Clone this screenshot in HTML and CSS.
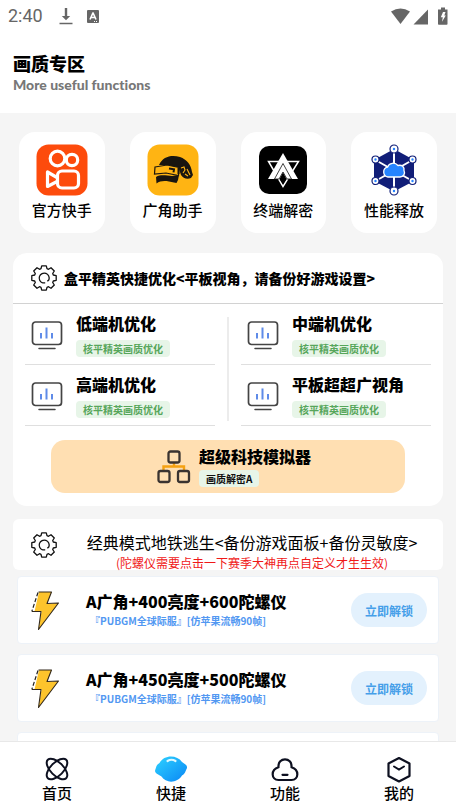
FILE: index.html
```html
<!DOCTYPE html>
<html lang="zh-CN">

<head>
    <meta charset="utf-8">
    <meta name="viewport" content="width=device-width, initial-scale=1">
    <title>画质专区</title>
    <link rel="stylesheet" href="styles.css">
</head>

<body>
    <!-- shared icons -->
    <svg class="sprite" width="0" height="0">
        <symbol id="gear" viewBox="-13 -13 26 26">
            <path d="M-3-9.3L-2.3-12.2H2.3L3-9.3 4.5-8.7 7-10.3 10.3-7 8.7-4.5 9.3-3 12.2-2.3V2.3L9.3 3 8.7 4.5 10.3 7 7 10.3 4.5 8.7 3 9.3 2.3 12.2H-2.3L-3 9.3-4.5 8.7-7 10.3-10.3 7-8.7 4.5-9.3 3-12.2 2.3V-2.3L-9.3-3-8.7-4.5-10.3-7-7-10.3-4.5-8.7Z" fill="none" stroke="#111" stroke-width="1.300" stroke-linejoin="round" />
            <path d="M-1.500 4.800A5 5 0 1 1 4.900 1.800L3.400 3.200M-1.500 4.800H1.200" fill="none" stroke="#111" stroke-width="1.300" />
        </symbol>
        <symbol id="monitor" viewBox="0 0 32 29">
            <rect x="1.500" y="1" width="29" height="22.500" rx="3" fill="#fff" stroke="#444" stroke-width="1.700" />
            <path d="M8 27.500H24" stroke="#444" stroke-width="1.500" stroke-linecap="round" />
            <path d="M10 12v5.500M15.500 6.500v11M21 12v5.500" stroke="#5f8be8" stroke-width="2" />
        </symbol>
        <symbol id="bolt" viewBox="0 0 30 40">
            <path d="M9 2H21.500L17 14 28.500 13 8.500 39.500 11 21.500H2Z" fill="#fff" />
            <path d="M9 2H21.500L17 14 28.500 13 8.500 39.500 11.500 21.500H4.500Z" fill="#fdc42c" />
            <path d="M8.500 2H21.500L17 13.500 28.500 13 8.500 39.500 11 21.500H2" fill="none" stroke="#33291c" stroke-width="1.100" stroke-linejoin="round" />
            <path d="M8 2.500L1.800 21.500" stroke="#222" stroke-width="1.200" stroke-dasharray="4 2" />
        </symbol>
    </svg>

    <div class="status">
        <span class="time">2:40</span>
        <svg class="st-down" width="14" height="18" viewBox="0 0 14 18">
            <path d="M5.800 1h2.400v8h3L7 13.200 2.800 9h3z" fill="#666" />
            <path d="M.5 16.500h13" stroke="#666" stroke-width="1.500" />
        </svg>
        <svg class="st-a" width="12" height="13" viewBox="0 0 12 13">
            <rect width="12" height="13" rx="1" fill="#666" />
            <path d="M3 9.500L5.900 3h.2L9 9.500M4.200 7.500h3.600" fill="none" stroke="#fff" stroke-width="1.600" />
            <path d="M7 11.500h1M9 11.500h1" stroke="#fff" />
        </svg>
        <svg class="st-right" width="58" height="18" viewBox="0 0 58 18">
            <path d="M1 4.500Q10.500-1.500 20 4.500L10.500 17z" fill="#666" />
            <path d="M38 2.500V17.500H23.500z" fill="#666" />
            <path d="M51 .5h4v2h2.500V17a.8.8 0 0 1-.8.8h-7.900a.8.8 0 0 1-.8-.8V2.500h3z" fill="#666" />
            <path d="M53 5h2.500l-1.200 3.600h1.500L52 14.800l.8-4.600h-2z" fill="#fff" />
        </svg>
    </div>

    <header class="top">
        <h1>画质专区</h1>
        <p>More useful functions</p>
    </header>

    <main>
        <div class="apps">
            <a class="app" href="#">
                <svg width="52" height="52" viewBox="0 0 52 52">
                    <rect x=".5" y=".5" width="51" height="51" rx="12" fill="#fd4b0c" />
                    <g fill="none" stroke="#fff" stroke-width="3.200" stroke-linejoin="round">
                        <circle cx="21.500" cy="14.500" r="7.300" />
                        <circle cx="36" cy="16" r="5.700" />
                        <rect x="21.500" y="27" width="21" height="17" rx="4.500" />
                        <path d="M21 33.500L11.500 28V42.500L21 37.500" />
                    </g>
                </svg>
                <span>官方快手</span>
            </a>
            <a class="app" href="#">
                <svg width="52" height="52" viewBox="0 0 52 52">
                    <rect x=".5" y=".5" width="51" height="51" rx="12" fill="#ffb413" />
                    <path d="M12 21C16 12 25 10.500 33 13C40 15.500 44 21 45 28L46 31 44 34C40 36 36 34 34 31L32 25 20 21Z" fill="#191510" />
                    <path d="M9.500 39.500L9 33C14 30 20 32 25 32L32 31 31 36 29.500 39 22 37.500C17 36.500 13 37 9.500 39.500Z" fill="#191510" />
                    <path d="M8 23L20 21 32 23.500 31.500 31.500 19 29 7.500 30Z" fill="#ffb413" stroke="#191510" stroke-width="1.200" />
                    <path d="M22 24.500l5 .8-.5 3M31.500 24v6" fill="none" stroke="#191510" stroke-width="2" />
                    <path d="M34 24l3-1 1 3-2 3M40 25l3 6M38 30l3 2" fill="none" stroke="#ffb413" stroke-width="1.100" />
                </svg>
                <span>广角助手</span>
            </a>
            <a class="app" href="#">
                <svg width="52" height="52" viewBox="0 0 52 52">
                    <rect x="2" y="2" width="48" height="48" rx="10" fill="#000" />
                    <path d="M11.500 17.500H41.500L26 42.500Z" fill="none" stroke="#fff" stroke-width="1.500" />
                    <path d="M26 9L41 35H11Z" fill="#fff" />
                    <path d="M26 19.500L34.500 35H30L26 28 22 35H17.500Z" fill="#fff" stroke="#111" stroke-width=".8" />
                    <path d="M22.500 35L26 28.500 29.500 35 26 40.500Z" fill="#000" />
                </svg>
                <span>终端解密</span>
            </a>
            <a class="app" href="#">
                <svg width="52" height="52" viewBox="0 0 52 52">
                    <path d="M26 5L46 16V37L26 47.500 6 37V16Z" fill="#111e78" />
                    <path d="M26 5V47M7.500 16L44.500 37M44.500 16L7.500 37" stroke="#fff" stroke-width="2" />
                    <g fill="#fff" stroke="#111e78" stroke-width="1.200">
                        <circle cx="26" cy="5" r="4" />
                        <circle cx="44.500" cy="15.500" r="3.500" />
                        <circle cx="44.500" cy="37" r="3.500" />
                        <circle cx="26" cy="47" r="4" />
                        <circle cx="7.500" cy="37" r="3.500" />
                        <circle cx="7.500" cy="15.500" r="3.500" />
                    </g>
                    <path d="M26 5h0M44.500 15.500h0M44.500 37h0M26 47h0M7.500 37h0M7.500 15.500h0" stroke="#2684ff" stroke-width="2.400" stroke-linecap="round" />
                    <path d="M20 33a5 5 0 0 1-.5-9.800C21 18.500 27 18 30 21.500c4-1 6.500 1.500 6 5 1.500 3-.5 6.500-4 6.500z" fill="#2684ff" stroke="#fff" stroke-width="1.300" />
                </svg>
                <span>性能释放</span>
            </a>
        </div>

        <section class="panel">
            <div class="panel-head">
                <svg width="26" height="26"><use href="#gear" /></svg>
                <h2>盒平精英快捷优化&lt;平板视角，请备份好游戏设置&gt;</h2>
            </div>
            <div class="grid">
                <div class="col">
                    <a class="cell" href="#">
                        <svg width="32" height="29"><use href="#monitor" /></svg>
                        <div><b>低端机优化</b><span class="tag">核平精英画质优化</span></div>
                    </a>
                    <a class="cell" href="#">
                        <svg width="32" height="29"><use href="#monitor" /></svg>
                        <div><b>高端机优化</b><span class="tag">核平精英画质优化</span></div>
                    </a>
                </div>
                <div class="split"></div>
                <div class="col">
                    <a class="cell" href="#">
                        <svg width="32" height="29"><use href="#monitor" /></svg>
                        <div><b>中端机优化</b><span class="tag">核平精英画质优化</span></div>
                    </a>
                    <a class="cell" href="#">
                        <svg width="32" height="29"><use href="#monitor" /></svg>
                        <div><b>平板超超广视角</b><span class="tag">核平精英画质优化</span></div>
                    </a>
                </div>
            </div>
            <button class="super" type="button">
                <svg width="34" height="34" viewBox="0 0 34 34">
                    <path d="M6.500 20V16.500H27V20M17 13v3.500" fill="none" stroke="#f5a112" stroke-width="2.400" />
                    <g fill="none" stroke="#3a3330" stroke-width="2.300">
                        <rect x="11.500" y="1.500" width="11" height="11" rx="2" />
                        <rect x="1.500" y="21" width="11" height="11" rx="2" />
                        <rect x="21" y="21" width="11" height="11" rx="2" />
                    </g>
                </svg>
                <span class="super-text"><b>超级科技模拟器</b><span class="tag dark">画质解密A</span></span>
            </button>
        </section>

        <section class="notice">
            <svg width="26" height="26"><use href="#gear" /></svg>
            <div>
                <h2>经典模式地铁逃生&lt;备份游戏面板+备份灵敏度&gt;</h2>
                <p>(陀螺仪需要点击一下赛季大神再点自定义才生生效)</p>
            </div>
        </section>

        <ul class="list">
            <li>
                <svg width="30" height="40"><use href="#bolt" /></svg>
                <div class="info">
                    <b>A广角+400亮度+600陀螺仪</b>
                    <span>『PUBGM全球际服』[仿苹果流畅90帧]</span>
                </div>
                <button type="button">立即解锁</button>
            </li>
            <li>
                <svg width="30" height="40"><use href="#bolt" /></svg>
                <div class="info">
                    <b>A广角+450亮度+500陀螺仪</b>
                    <span>『PUBGM全球际服』[仿苹果流畅90帧]</span>
                </div>
                <button type="button">立即解锁</button>
            </li>
            <li></li>
        </ul>
    </main>

    <nav>
        <a href="#">
            <svg width="34" height="28" viewBox="0 0 34 28">
                <g fill="none" stroke="#0d1020" stroke-width="2">
                    <ellipse cx="17" cy="14" rx="13" ry="6.500" transform="rotate(45 17 14)" />
                    <ellipse cx="17" cy="14" rx="13" ry="6.500" transform="rotate(-45 17 14)" />
                </g>
            </svg>
            <span>首页</span>
        </a>
        <a href="#">
            <svg width="34" height="28" viewBox="0 0 34 28">
                <defs>
                    <linearGradient id="blue" x1="0" y1="0" x2="1" y2="1">
                        <stop offset="0" stop-color="#2ed3ff" />
                        <stop offset="1" stop-color="#0a86f5" />
                    </linearGradient>
                </defs>
                <path d="M5.500 8C10-.5 23-.5 28 7L31.500 9.500Q34 11.500 32.500 14L31 17.500Q30 19.500 28 20.500C23 28.500 12 28.500 7.500 21.500L2.500 18.500Q.5 17 1.200 15L2.500 11Q3.500 9 5.500 8Z" fill="url(#blue)" />
                <path d="M13.500 6Q17.500 3.500 21.500 6" fill="none" stroke="#dff8ff" stroke-width="2.200" stroke-linecap="round" />
            </svg>
            <span>快捷</span>
        </a>
        <a href="#">
            <svg width="34" height="28" viewBox="0 0 34 28">
                <path d="M10.500 12.200C9.500 1.800 24.500 1.800 23.500 12.200C31.500 14.500 31 25 23.500 25H10.500C3 25 2.500 14.500 10.500 12.200Z" fill="none" stroke="#0d1020" stroke-width="2.200" stroke-linejoin="round" />
                <path d="M14.500 19.800h5" stroke="#0d1020" stroke-width="2.200" stroke-linecap="round" />
            </svg>
            <span>功能</span>
        </a>
        <a href="#">
            <svg width="34" height="28" viewBox="0 0 34 28">
                <path d="M17 3L27.500 8.500V21L17 26.500 6.500 21V8.500Z" fill="none" stroke="#0d1020" stroke-width="2.200" stroke-linejoin="round" />
                <path d="M12 11.500L17 14.500 22 11.500" fill="none" stroke="#0d1020" stroke-width="2" stroke-linecap="round" />
            </svg>
            <span>我的</span>
        </a>
    </nav>
</body>

</html>
```

FILE: styles.css
```css
* {
    box-sizing: border-box;
}

body {
    margin: 0;
    height: 100vh;
    display: flex;
    flex-direction: column;
    font-family: "Noto Sans CJK SC", sans-serif;
    color: #000;
    background: #f5f5f5;
}

h1,
h2,
p,
ul {
    margin: 0;
    padding: 0;
}

a {
    color: inherit;
    text-decoration: none;
}

button {
    font-family: inherit;
    border: 0;
    color: inherit;
    cursor: pointer;
}

svg {
    display: block;
    flex: none;
}

.sprite {
    position: absolute;
}

/* status bar */
.status {
    display: flex;
    align-items: center;
    height: 32px;
    padding: 0 8px;
    background: #fff;
    flex: none;
}

.time {
    width: 51px;
    font: 18px/32px Roboto, sans-serif;
    color: #666;
}

.st-a {
    margin-left: 14px;
}

.st-right {
    margin-left: auto;
}

/* header */
.top {
    height: 81px;
    padding: 18px 13px 0;
    background: #fff;
    flex: none;
}

.top h1 {
    font-size: 18px;
    font-weight: 900;
    line-height: 26px;
}

.top p {
    font: 900 14px/17px Lato, sans-serif;
    font-variant-ligatures: none;
    color: #777;
}

main {
    flex: 1;
    min-height: 0;
    overflow-y: auto;
    padding: 19px 13px 0;
    scrollbar-width: none;
}

/* app shortcuts */
.apps {
    display: flex;
    gap: 25px;
    padding: 0 6px;
    margin-bottom: 20px;
}

.app {
    flex: 1;
    display: flex;
    flex-direction: column;
    align-items: center;
    height: 101px;
    padding-top: 12px;
    border-radius: 16px;
    background: #fff;
}

.app span {
    margin-top: 3px;
    font-size: 15px;
    line-height: 22px;
    font-weight: 500;
}

/* main panel */
.panel {
    padding-bottom: 13px;
    margin-bottom: 13px;
    border-radius: 14px;
    background: #fff;
}

.panel-head {
    display: flex;
    align-items: center;
    gap: 7px;
    height: 51px;
    padding-left: 18px;
    border-bottom: 1px solid #d2d2d2;
}

.panel-head h2 {
    font-size: 14px;
    line-height: 20px;
    font-weight: 900;
}

.grid {
    display: flex;
    padding: 0 12px;
}

.col {
    flex: 1;
}

.split {
    width: 2px;
    margin: 13px 12px 5px;
    background: #ececec;
}

.cell {
    display: flex;
    align-items: center;
    gap: 13px;
    height: 61px;
    padding: 2px 0 0 6px;
    border-bottom: 1px solid #dfdfdf;
}

.cell div,
.super-text {
    display: flex;
    flex-direction: column;
    align-items: flex-start;
    gap: 7px;
}

.cell b,
.super b {
    font-size: 16px;
    line-height: 20px;
    font-weight: 900;
}

.tag {
    padding: 0 7px;
    border-radius: 4px;
    font-size: 10px;
    line-height: 17px;
    font-weight: 700;
    color: #57a65b;
    background: #e7f5e8;
}

.tag.dark {
    color: #111;
}

.super {
    display: flex;
    align-items: center;
    justify-content: center;
    gap: 8px;
    width: calc(100% - 76px);
    height: 53px;
    margin: 14px 38px 0;
    padding: 0 0 0 12px;
    border-radius: 14px;
    background: #ffdfb2;
}

.super-text {
    gap: 4px;
}

/* notice */
.notice {
    display: flex;
    align-items: center;
    height: 51px;
    padding-left: 18px;
    margin-bottom: 6px;
    border-radius: 6px;
    background: #fff;
}

.notice div {
    flex: 1;
    padding: 12px 8px 0 12px;
    text-align: center;
}

.notice h2 {
    font-size: 16px;
    line-height: 24px;
    font-weight: 400;
}

.notice p {
    font-size: 12px;
    line-height: 18px;
    color: #f01818;
}

/* unlock list */
.list {
    list-style: none;
    padding: 0 4px;
}

.list li {
    display: flex;
    align-items: center;
    height: 68px;
    padding: 0 11px 0 12px;
    margin-bottom: 10px;
    border: 1px solid #edf2f8;
    border-radius: 4px;
    background: #fff;
}

.info {
    flex: 1;
    display: flex;
    flex-direction: column;
    padding: 2px 0 0 26px;
}

.info b {
    font-size: 16px;
    line-height: 20px;
    font-weight: 900;
}

.info span {
    padding-left: 4px;
    font-size: 10px;
    line-height: 20px;
    font-weight: 700;
    color: #5298f2;
}

.list button {
    width: 76px;
    height: 34px;
    padding: 0;
    border-radius: 17px;
    font-size: 12px;
    font-weight: 700;
    color: #469fe9;
    background: #e3f1fd;
}

/* bottom nav */
nav {
    display: flex;
    flex: none;
    height: 71px;
    border-top: 1px solid #e8e8e8;
    background: #fff;
}

nav a {
    flex: 1;
    display: flex;
    flex-direction: column;
    align-items: center;
    padding-top: 13px;
}

nav span {
    font-size: 15px;
    line-height: 20px;
    font-weight: 500;
}
```
